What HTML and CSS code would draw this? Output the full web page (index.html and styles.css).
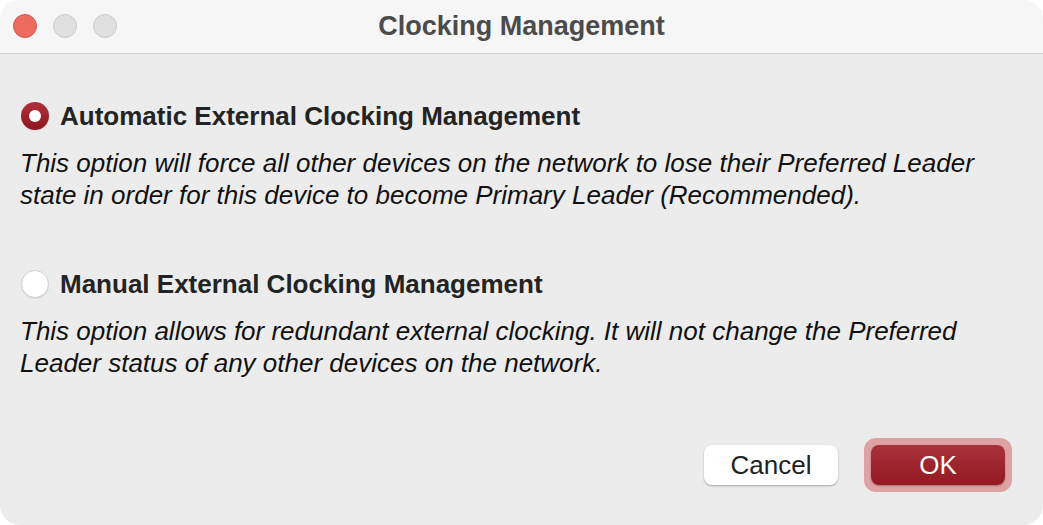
FILE: index.html
```html
<!DOCTYPE html>
<html lang="en">
<head>
  <meta charset="UTF-8">
  <title>Clocking Management</title>
  <link rel="stylesheet" href="styles.css">
</head>
<body>
  <div class="window">
    <!-- Title bar -->
    <div class="titlebar">
      <div class="lights">
        <span class="light close"></span>
        <span class="light"></span>
        <span class="light"></span>
      </div>
      <div class="title">Clocking Management</div>
    </div>

    <div class="content">
      <div class="option">
        <label class="option-label">
          <span class="radio checked"></span>
          Automatic External Clocking Management
        </label>
        <p class="option-desc">This option will force all other devices on the network to lose their Preferred Leader state in order for this device to become Primary Leader (Recommended).</p>
      </div>

      <div class="option">
        <label class="option-label">
          <span class="radio"></span>
          Manual External Clocking Management
        </label>
        <p class="option-desc">This option allows for redundant external clocking. It will not change the Preferred Leader status of any other devices on the network.</p>
      </div>

      <div class="buttons">
        <button class="btn">Cancel</button>
        <span class="btn-focus"><button class="btn btn-primary">OK</button></span>
      </div>
    </div>
  </div>
</body>
</html>
```

FILE: styles.css
```css
/* General Styles */
html, body {
  margin: 0;
  height: 100%;
  background-color: #ffffff;
}

body {
  font-family: "Liberation Sans", Arial, sans-serif;
}

.window {
  height: 525px;
  background-color: #ececec;
  border-radius: 20px;
  overflow: hidden;
  display: flex;
  flex-direction: column;
}

.titlebar {
  height: 53px;
  background-color: #f6f6f6;
  border-bottom: 1px solid #d4d4d4;
  position: relative;
  display: flex;
  align-items: center;
  justify-content: center;
}

.lights {
  position: absolute;
  left: 13px;
  top: 14px;
  display: flex;
  gap: 16px;
}

.light {
  width: 22px;
  height: 22px;
  border-radius: 50%;
  background-color: #e0e0e0;
  border: 1px solid #c9c9c9;
}

.light.close {
  background-color: #ec6a5e;
  border-color: #d5544a;
}

.title {
  font-size: 27px;
  font-weight: bold;
  color: #4b4b4b;
}

.content {
  flex: 1;
  padding: 46px 50px 0 21px;
  display: flex;
  flex-direction: column;
}

.option {
  margin-bottom: 57px;
}

.option-label {
  display: flex;
  align-items: center;
  gap: 11px;
  font-size: 26px;
  font-weight: bold;
  color: #232323;
  height: 32px;
}

.radio {
  width: 28px;
  height: 28px;
  border-radius: 50%;
  box-sizing: border-box;
  background-color: #ffffff;
  border: 1px solid #d0d0d0;
  box-shadow: 0 1px 1px rgba(0, 0, 0, 0.08);
  position: relative;
}

.radio.checked {
  border: none;
  background: linear-gradient(#b0303a, #8e1620);
}

.radio.checked::after {
  content: "";
  position: absolute;
  left: 8px;
  top: 8px;
  width: 12px;
  height: 12px;
  border-radius: 50%;
  background-color: #ffffff;
}

.option-desc {
  margin: 15px 0 0 -1px;
  font-size: 26px;
  font-style: italic;
  line-height: 32px;
  color: #111111;
}

.buttons {
  margin-top: auto;
  margin-bottom: 33px;
  margin-right: -19px;
  display: flex;
  justify-content: flex-end;
  align-items: center;
  gap: 26px;
}

.btn {
  width: 134px;
  height: 40px;
  border: none;
  border-radius: 8px;
  background-color: #ffffff;
  box-shadow: 0 1px 2px rgba(0, 0, 0, 0.3);
  font-family: "Liberation Sans", Arial, sans-serif;
  font-size: 26px;
  color: #222222;
}

.btn-focus {
  display: block;
  padding: 7px;
  border-radius: 12px;
  background-color: #dfa2a4;
}

.btn-primary {
  display: block;
  background: linear-gradient(#a9323b, #931822);
  color: #ffffff;
}
```
